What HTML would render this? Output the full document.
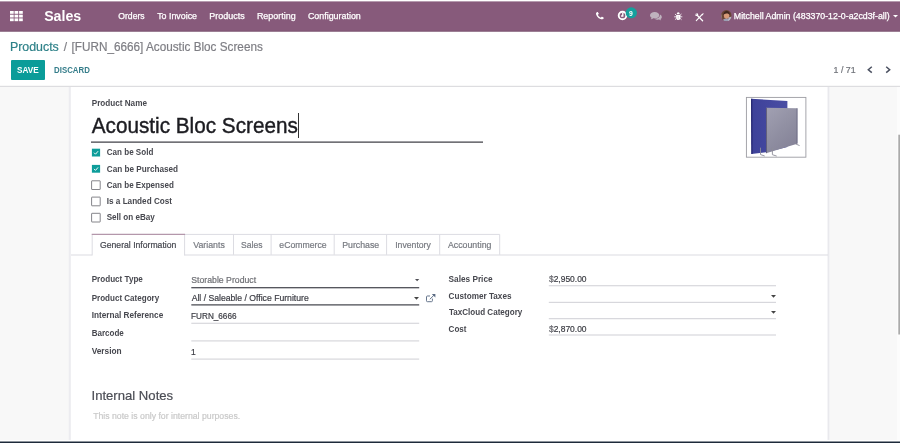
<!DOCTYPE html>
<html><head><meta charset="utf-8"><title>Acoustic Bloc Screens - Odoo</title>
<style>
*{box-sizing:border-box;margin:0;padding:0}
html,body{width:900px;height:443px;overflow:hidden;background:#fff;font-family:"Liberation Sans",sans-serif}
body{position:relative}
.a{position:absolute}
.t{position:absolute;white-space:nowrap;transform-origin:0 50%}
svg{position:absolute;overflow:visible}
.ul{position:absolute;height:1px;background:#d6d6da}
.ul.d{background:#55565c;height:1.4px}
</style></head><body>
<!-- background layers -->
<svg class="a" style="left:0;top:0" width="900" height="443" viewBox="0 0 900 443">
 <rect x="0" y="1.4" width="900" height="30.1" fill="#875a7b"/>
 <rect x="0" y="86.600" width="900" height="353.300" fill="#f8f8f8"/>
 <rect x="0" y="85.800" width="900" height="1.100" fill="#dadadd"/>
 <rect x="68.600" y="87" width="761" height="352.900" fill="#f0f0f3"/>
 <rect x="69.600" y="87" width="759" height="352.900" fill="#e5e5ea"/>
 <rect x="70.600" y="87" width="757" height="353" fill="#fff"/>
 <rect x="897" y="87" width="3" height="352.900" fill="#fcfcfc"/>
 <rect x="898.300" y="134.700" width="1.700" height="199.800" fill="#ababab"/>
 <rect x="0" y="441.500" width="900" height="1.500" fill="#1d2a3a"/>
 <rect x="0" y="30.800" width="900" height=".7" fill="#76526c"/>
</svg>

<!-- navbar icons -->
<svg style="left:10.2px;top:11px" width="12.8" height="10.2" viewBox="0 0 12.8 10.2"><g fill="#fff"><rect x="0" y="0" width="3.7" height="2.8"/><rect x="4.55" y="0" width="3.7" height="2.8"/><rect x="9.1" y="0" width="3.7" height="2.8"/><rect x="0" y="3.7" width="3.7" height="2.8"/><rect x="4.55" y="3.7" width="3.7" height="2.8"/><rect x="9.1" y="3.7" width="3.7" height="2.8"/><rect x="0" y="7.4" width="3.7" height="2.8"/><rect x="4.55" y="7.4" width="3.7" height="2.8"/><rect x="9.1" y="7.4" width="3.7" height="2.8"/></g></svg>

<!-- phone -->
<svg style="left:595.700px;top:12px" width="7.800" height="7.300" viewBox="192 128 1408 1408" preserveAspectRatio="none"><path fill="#fff" d="M1600 1240q0 27-10 70.500t-21 68.500q-21 50-122 106-94 51-186 51-27 0-53-3.500t-57.500-12.500-47-14.500-55.500-20.500-49-18q-98-35-175-83-127-79-264-216t-216-264q-48-77-83-175-3-9-18-49t-20.500-55.500-14.500-47-12.500-57.500-3.500-53q0-92 51-186 56-101 106-122 25-11 68.500-21t70.500-10q14 0 21 3 18 6 53 76 11 19 30 54t35 63.500 31 53.500q3 4 17.500 25t21.500 35.500 7 28.500q0 20-28.500 50t-62 55-62 53-28.500 46q0 9 5 22.500t8.500 20.500 14 24 11.500 19q76 137 174 235t235 174q2 1 19 11.500t24 14 20.500 8.500 22.500 5q18 0 46-28.500t53-62 55-62 50-28.500q14 0 28.500 7t35.500 21.500 25 17.500q25 15 53.500 31t63.500 35 54 30q70 35 76 53 3 7 3 21z"/></svg>

<!-- clock + badge -->
<svg style="left:617px;top:7px" width="21" height="14" viewBox="0 0 21 14">
 <circle cx="5.500" cy="8.500" r="3.800" fill="none" stroke="#fff" stroke-width="1.900"/>
 <path d="M5.800 6V9H4.100" fill="none" stroke="#fff" stroke-width="1.300"/>
 <ellipse cx="14.300" cy="5.800" rx="5.650" ry="5.500" fill="#14a09d"/>
</svg>

<!-- comments -->
<svg style="left:649.600px;top:11.600px" width="11.800" height="8.600" viewBox="0 0 11.800 8.600"><g fill="#bfb2be"><path d="M4.700 0C7.300 0 9.300 1.400 9.300 3.200S7.300 6.400 4.700 6.400c-.5 0-1-.05-1.400-.15C2.600 6.800 1.700 7.200.7 7.300c.5-.5.800-1 .9-1.600C.6 5.100 0 4.200 0 3.200 0 1.400 2.100 0 4.700 0z"/><path d="M9.900 2.400c1.200.5 1.900 1.400 1.900 2.500 0 .9-.5 1.600-1.300 2.200.1.500.4 1 .9 1.400-.9-.1-1.700-.4-2.300-.9-.4.100-.8.100-1.200.1-1.300 0-2.400-.4-3.100-1 2.900-.1 5.200-1.600 5.200-3.500 0-.3 0-.5-.1-.8z"/></g></svg>

<!-- bug -->
<svg style="left:673.500px;top:11.800px" width="8.500" height="8.300" viewBox="0 0 8.800 8.600"><g fill="none" stroke="#fff" stroke-width="0.850"><path d="M0.200 5h8.400M1 2.100l1.600 1.400M7.800 2.100L6.200 3.500M1 8l1.600-1.500M7.800 8L6.200 6.500"/></g><path fill="#fff" d="M2.300 3h4.200v2.900c0 1.400-.9 2.500-2.100 2.500S2.300 7.300 2.300 5.900z"/><path fill="#fff" d="M2.900 2.400C2.900 1.100 3.500.2 4.400.2s1.500.9 1.500 2.200z"/><path d="M4.400 4V7.800" stroke="#c9a9bf" stroke-width=".5"/></svg>

<!-- tools -->
<svg style="left:694.800px;top:12.900px" width="9" height="8.800" viewBox="0 0 9 8.800"><g stroke="#fff" fill="none" stroke-linecap="round"><path d="M1.700 1.700L7.600 7.800" stroke-width="1.250"/><path d="M7.500 1.200L1.300 7.700" stroke-width="1.100"/></g><circle cx="1.600" cy="1.600" r="1.500" fill="#fff"/><circle cx="0.900" cy="0.900" r="0.800" fill="#875a7b"/><path d="M6.600 1.800L8.300.2l.5.500L7.200 2.400z" fill="#fff"/></svg>

<!-- avatar -->
<svg style="left:720.700px;top:9.900px" width="10.700" height="11.400" viewBox="0 0 10.700 11.400"><defs><clipPath id="av"><ellipse cx="5.350" cy="5.700" rx="5.300" ry="5.600"/></clipPath></defs><g clip-path="url(#av)"><rect width="10.700" height="11.400" fill="#6a4436"/><path d="M0 3C1 5 1.500 8 1 11.400H0z" fill="#8f7f7a"/><ellipse cx="5.600" cy="5.600" rx="2.700" ry="3.300" fill="#d79a78"/><path d="M2.400 5C2.300 2.200 3.900.8 5.800.9c2.100.1 3.300 1.700 3 4.200C8 3.800 6.700 3.200 5.300 3.500 4.100 3.700 3 4.200 2.400 5z" fill="#3f271f"/><path d="M1.300 11.400C1.900 9.100 3.500 8.500 5.600 8.500S9.300 9.300 9.900 11.400z" fill="#9b9db4"/><path d="M7.500 7.500l3.200-1v5H7z" fill="#b9b7c6"/></g></svg>

<!-- user caret -->
<svg style="left:893px;top:14.800px" width="5" height="2.600" viewBox="0 0 5 2.600"><path d="M0 0h5L2.500 2.600z" fill="#fff"/></svg>

<!-- save button -->
<div class="a" style="left:11px;top:60px;width:34.400px;height:19.700px;background:#0a9c99;border-radius:1px"></div>

<!-- pager chevrons -->
<svg style="left:867px;top:66px" width="6" height="7.400" viewBox="0 0 6 7.400"><path d="M4.800.700L1.300 3.700l3.500 3" fill="none" stroke="#4a5060" stroke-width="1.500"/></svg>
<svg style="left:885.400px;top:66px" width="6" height="7.400" viewBox="0 0 6 7.400"><path d="M1.200.700l3.500 3L1.200 6.700" fill="none" stroke="#4a5060" stroke-width="1.500"/></svg>

<!-- title caret + underline -->
<div class="a" style="left:298px;top:112.500px;width:1px;height:25px;background:#333"></div>
<svg style="left:91.400px;top:141px" width="392" height="3" viewBox="0 0 392 3"><rect x="0" y="0.350" width="392" height="1.600" fill="#6a6a70"/></svg>

<!-- checkboxes -->
<svg style="left:0;top:0" width="900" height="443" viewBox="0 0 900 443">
 <rect x="91.900" y="148.700" width="8.200" height="7.800" fill="#0d9d9a"/>
 <path d="M94 152.700l1.500 1.500 2.600-3" fill="none" stroke="#fff" stroke-width=".95"/>
 <rect x="91.900" y="164.900" width="8.200" height="7.800" fill="#0d9d9a"/>
 <path d="M94 168.900l1.500 1.500 2.600-3" fill="none" stroke="#fff" stroke-width=".95"/>
 <g fill="#fff" stroke="#85858a" stroke-width="1"><rect x="91.600" y="180.800" width="8.600" height="8.700" rx=".3"/>
 <rect x="91.600" y="197.100" width="8.600" height="8.700" rx=".3"/>
 <rect x="91.600" y="213.300" width="8.600" height="8.700" rx=".3"/></g>
</svg>

<!-- product image -->
<svg style="left:746px;top:96.600px" width="60.400" height="60.400" viewBox="0 0 60.400 60.400">
 <defs><linearGradient id="gp" x1="0.200" y1="0" x2="0.800" y2="1"><stop offset="0" stop-color="#9f9eb0"/><stop offset=".5" stop-color="#908fa2"/><stop offset="1" stop-color="#838196"/></linearGradient>
 <linearGradient id="bp" x1="0" y1="0" x2="1" y2="0"><stop offset="0" stop-color="#3d4199"/><stop offset="1" stop-color="#4a4ea4"/></linearGradient></defs>
 <rect x=".400" y=".400" width="59.500" height="59.800" fill="#fff" stroke="#9c9ca2" stroke-width=".9"/>
 <path d="M5.100 1.700L41.400 4.100V50L20 55.300L5.400 57.100z" fill="url(#bp)"/>
 <path d="M5.100 1.700L6.300 1.800L6.500 56.900L5.400 57.100z" fill="#23256e"/>
 <path d="M20.100 10.700L51.200 11.200V46.700L20.100 56.300z" fill="url(#gp)"/>
 <path d="M20.100 10.700l.9 0V56l-.9.300z" fill="#5f5d78"/>
 <path d="M50.700 11.200h.8V46.600l-.8.200z" fill="#5f5d78"/>
 <path d="M14.500 50.700V57.600l4.200 1.400M26.400 50.700V57.700l4.300 1.400M49.600 46.900l4 1.700" fill="none" stroke="#8d8d98" stroke-width=".9"/>
</svg>

<!-- tabs -->
<svg style="left:0;top:0" width="900" height="443" viewBox="0 0 900 443">
 <rect x="71" y="254.500" width="757" height="1" fill="#dcdce2"/>
 <path d="M184.600 234.400H499.700V254.800" fill="none" stroke="#dcdce2" stroke-width="1"/>
 <path d="M233.500 234.400V254.800M271.100 234.400V254.800M334.200 234.400V254.800M386.600 234.400V254.800M439.700 234.400V254.800" fill="none" stroke="#dcdce2" stroke-width="1"/>
 <rect x="92.300" y="234.600" width="92" height="21.500" fill="#fff"/>
 <path d="M92.200 255.400V234.400M184.600 234.400V255.400" fill="none" stroke="#dcdce2" stroke-width="1"/>
 <path d="M91.700 234.400H185.100" fill="none" stroke="#b497ab" stroke-width="1.100"/>
</svg>

<!-- field underlines -->
<svg style="left:0;top:0" width="900" height="443" viewBox="0 0 900 443">
 <g fill="#56575e"><rect x="191.300" y="287" width="227.900" height="1.350"/><rect x="191.300" y="304.200" width="227.900" height="1.350"/></g>
 <g fill="#d7d7dc"><rect x="191.300" y="322.700" width="227.900" height="1.200"/><rect x="191.300" y="340.300" width="227.900" height="1.200"/><rect x="191.300" y="358.500" width="227.900" height="1.200"/>
 <rect x="548.800" y="285.100" width="227.200" height="1.200"/><rect x="548.800" y="301.800" width="227.200" height="1.200"/><rect x="548.800" y="318.050" width="227.200" height="1.200"/><rect x="548.800" y="334.400" width="227.200" height="1.200"/></g>
</svg>

<!-- dropdown carets -->
<svg style="left:414.900px;top:278.800px" width="4.300" height="2.300" viewBox="0 0 4.300 2.300"><path d="M0 0h4.300L2.150 2.300z" fill="#505056"/></svg>
<svg style="left:413.800px;top:296.800px" width="5" height="2.700" viewBox="0 0 5 2.700"><path d="M0 0h5L2.500 2.700z" fill="#444"/></svg>
<svg style="left:771px;top:294.800px" width="5" height="2.700" viewBox="0 0 5 2.700"><path d="M0 0h5L2.500 2.700z" fill="#444"/></svg>
<svg style="left:771px;top:311.100px" width="5" height="2.700" viewBox="0 0 5 2.700"><path d="M0 0h5L2.500 2.700z" fill="#444"/></svg>

<!-- external link -->
<svg style="left:425.600px;top:293.800px" width="9.600" height="8.400" viewBox="0 0 9.600 8.400"><g fill="none" stroke="#64748c" stroke-width="1"><path d="M6.400 4.600V6.800a.9.900 0 0 1-.9.900H1.400a.9.900 0 0 1-.9-.9V2.900A.9.900 0 0 1 1.400 2H4"/><path d="M3.800 5.300L8.600.6"/></g><path d="M5.800.1h3.600v3.500z" fill="#5a6a82"/></svg>

<div id="tx" style="position:absolute;left:0;top:0;width:900px;height:443px;will-change:transform">
<div class="t" style="left:44px;top:7px;font-size:14px;line-height:18.2px;color:#fff;font-weight:bold;transform:translateX(0.14px) scaleX(1.0136);">Sales</div>
<div class="t" style="left:118px;top:11px;font-size:8.6px;line-height:11.18px;color:#fff;-webkit-text-stroke:.25px #fff;transform:translateX(0.27px) scaleX(1.0022);">Orders</div>
<div class="t" style="left:157px;top:11px;font-size:8.6px;line-height:11.18px;color:#fff;-webkit-text-stroke:.25px #fff;transform:translateX(0.13px) scaleX(1.0315);">To Invoice</div>
<div class="t" style="left:209px;top:11px;font-size:8.6px;line-height:11.18px;color:#fff;-webkit-text-stroke:.25px #fff;transform:translateX(0.3px) scaleX(1.0424);">Products</div>
<div class="t" style="left:256px;top:11px;font-size:8.6px;line-height:11.18px;color:#fff;-webkit-text-stroke:.25px #fff;transform:translateX(0.93px) scaleX(1.0382);">Reporting</div>
<div class="t" style="left:307px;top:11px;font-size:8.6px;line-height:11.18px;color:#fff;-webkit-text-stroke:.25px #fff;transform:translateX(0.91px) scaleX(1.0343);">Configuration</div>
<div class="t" style="left:733px;top:11px;font-size:8.6px;line-height:11.18px;color:#fff;-webkit-text-stroke:.25px #fff;transform:translateX(0.83px) scaleX(1.0227);">Mitchell Admin (483370-12-0-a2cd3f-all)</div>
<div class="t" style="left:9px;top:40px;font-size:11.9px;line-height:15.47px;color:#2f8289;-webkit-text-stroke:.2px #2f8289;transform:translateX(0.9px) scaleX(1.0416);">Products</div>
<div class="t" style="left:63px;top:40px;font-size:11.9px;line-height:15.47px;color:#7e7e84;-webkit-text-stroke:.2px #7e7e84;transform:translateX(0.74px) scaleX(1.0000);">/</div>
<div class="t" style="left:71px;top:40px;font-size:11.9px;line-height:15.47px;color:#7e7e84;-webkit-text-stroke:.2px #7e7e84;transform:translateX(0.56px) scaleX(0.9877);">[FURN_6666] Acoustic Bloc Screens</div>
<div class="t" style="left:17px;top:65px;font-size:8.5px;line-height:11.05px;color:#fff;font-weight:bold;transform:translateX(0.08px) scaleX(0.9620);">SAVE</div>
<div class="t" style="left:54px;top:65px;font-size:8.5px;line-height:11.05px;color:#357d8a;font-weight:bold;transform:translateX(0.11px) scaleX(0.9214);">DISCARD</div>
<div class="t" style="left:833px;top:65px;font-size:8.4px;line-height:10.92px;color:#70737a;-webkit-text-stroke:.2px #70737a;transform:translateX(0.51px) scaleX(1.0548);">1 / 71</div>
<div class="t" style="left:91px;top:98px;font-size:8.5px;line-height:11.05px;color:#47484f;font-weight:bold;transform:translateX(0.69px) scaleX(0.9587);">Product Name</div>
<div class="t" style="left:91px;top:112px;font-size:21.2px;line-height:27.56px;color:#1c1c21;-webkit-text-stroke:.4px #1c1c21;transform:translateX(0.79px) scaleX(0.9772);">Acoustic Bloc Screens</div>
<div class="t" style="left:106px;top:147px;font-size:8.5px;line-height:11.05px;color:#47484f;font-weight:bold;transform:translateX(0.81px) scaleX(0.9464);">Can be Sold</div>
<div class="t" style="left:106px;top:164px;font-size:8.5px;line-height:11.05px;color:#47484f;font-weight:bold;transform:translateX(0.77px) scaleX(0.9610);">Can be Purchased</div>
<div class="t" style="left:106px;top:180px;font-size:8.5px;line-height:11.05px;color:#47484f;font-weight:bold;transform:translateX(0.81px) scaleX(0.9461);">Can be Expensed</div>
<div class="t" style="left:106px;top:196px;font-size:8.5px;line-height:11.05px;color:#47484f;font-weight:bold;transform:translateX(0.77px) scaleX(0.9589);">Is a Landed Cost</div>
<div class="t" style="left:106px;top:212px;font-size:8.5px;line-height:11.05px;color:#47484f;font-weight:bold;transform:translateX(0.7px) scaleX(0.9524);">Sell on eBay</div>
<div class="t" style="left:99px;top:240px;font-size:8.5px;line-height:11.05px;color:#45474f;-webkit-text-stroke:.2px #45474f;transform:translateX(1.0px) scaleX(1.0163);">General Information</div>
<div class="t" style="left:193px;top:240px;font-size:8.5px;line-height:11.05px;color:#777a80;-webkit-text-stroke:.2px #777a80;transform:translateX(0.18px) scaleX(1.0344);">Variants</div>
<div class="t" style="left:241px;top:240px;font-size:8.5px;line-height:11.05px;color:#777a80;-webkit-text-stroke:.2px #777a80;transform:translateX(0.1px) scaleX(1.0079);">Sales</div>
<div class="t" style="left:279px;top:240px;font-size:8.5px;line-height:11.05px;color:#777a80;-webkit-text-stroke:.2px #777a80;transform:translateX(0.35px) scaleX(1.0214);">eCommerce</div>
<div class="t" style="left:342px;top:240px;font-size:8.5px;line-height:11.05px;color:#777a80;-webkit-text-stroke:.2px #777a80;transform:translateX(0.19px) scaleX(1.0320);">Purchase</div>
<div class="t" style="left:395px;top:240px;font-size:8.5px;line-height:11.05px;color:#777a80;-webkit-text-stroke:.2px #777a80;transform:translateX(0.21px) scaleX(1.0182);">Inventory</div>
<div class="t" style="left:448px;top:240px;font-size:8.5px;line-height:11.05px;color:#777a80;-webkit-text-stroke:.2px #777a80;transform:translateX(0.0px) scaleX(1.0314);">Accounting</div>
<div class="t" style="left:91px;top:274px;font-size:8.5px;line-height:11.05px;color:#47484f;font-weight:bold;transform:translateX(0.69px) scaleX(0.9533);">Product Type</div>
<div class="t" style="left:91px;top:293px;font-size:8.5px;line-height:11.05px;color:#47484f;font-weight:bold;transform:translateX(0.69px) scaleX(0.9462);">Product Category</div>
<div class="t" style="left:91px;top:310px;font-size:8.5px;line-height:11.05px;color:#47484f;font-weight:bold;transform:translateX(0.68px) scaleX(0.9647);">Internal Reference</div>
<div class="t" style="left:91px;top:328px;font-size:8.5px;line-height:11.05px;color:#47484f;font-weight:bold;transform:translateX(0.69px) scaleX(0.9434);">Barcode</div>
<div class="t" style="left:91px;top:346px;font-size:8.5px;line-height:11.05px;color:#47484f;font-weight:bold;transform:translateX(0.66px) scaleX(0.9772);">Version</div>
<div class="t" style="left:191px;top:275px;font-size:8.5px;line-height:11.05px;color:#6f7075;-webkit-text-stroke:.2px #6f7075;transform:translateX(0.27px) scaleX(1.0243);">Storable Product</div>
<div class="t" style="left:191px;top:293px;font-size:8.5px;line-height:11.05px;color:#3c3d44;-webkit-text-stroke:.2px #3c3d44;transform:translateX(0.63px) scaleX(1.0173);">All / Saleable / Office Furniture</div>
<div class="t" style="left:191px;top:311px;font-size:8.5px;line-height:11.05px;color:#3c3d44;-webkit-text-stroke:.2px #3c3d44;transform:translateX(0.11px) scaleX(0.9602);">FURN_6666</div>
<div class="t" style="left:191px;top:347px;font-size:8.5px;line-height:11.05px;color:#3c3d44;-webkit-text-stroke:.2px #3c3d44;transform:translateX(0.08px) scaleX(1.0000);">1</div>
<div class="t" style="left:448px;top:274px;font-size:8.5px;line-height:11.05px;color:#47484f;font-weight:bold;transform:translateX(0.56px) scaleX(0.9696);">Sales Price</div>
<div class="t" style="left:448px;top:291px;font-size:8.5px;line-height:11.05px;color:#47484f;font-weight:bold;transform:translateX(0.59px) scaleX(0.9600);">Customer Taxes</div>
<div class="t" style="left:448px;top:307px;font-size:8.5px;line-height:11.05px;color:#47484f;font-weight:bold;transform:translateX(0.98px) scaleX(0.9483);">TaxCloud Category</div>
<div class="t" style="left:448px;top:324px;font-size:8.5px;line-height:11.05px;color:#47484f;font-weight:bold;transform:translateX(0.59px) scaleX(0.9484);">Cost</div>
<div class="t" style="left:548px;top:274px;font-size:8.5px;line-height:11.05px;color:#3c3d44;-webkit-text-stroke:.2px #3c3d44;transform:translateX(0.92px) scaleX(0.9944);"><span style="color:#8a8a90">$</span>2,950.00</div>
<div class="t" style="left:548px;top:324px;font-size:8.5px;line-height:11.05px;color:#3c3d44;-webkit-text-stroke:.2px #3c3d44;transform:translateX(0.92px) scaleX(0.9944);"><span style="color:#8a8a90">$</span>2,870.00</div>
<div class="t" style="left:91px;top:388px;font-size:13.0px;line-height:16.9px;color:#4b4d55;-webkit-text-stroke:.2px #4b4d55;transform:translateX(0.51px) scaleX(1.0083);">Internal Notes</div>
<div class="t" style="left:93px;top:411px;font-size:8.5px;line-height:11.05px;color:#c9c9c9;-webkit-text-stroke:.2px #c9c9c9;transform:translateX(0.13px) scaleX(1.0237);">This note is only for internal purposes.</div>
<div class="t" style="left:629px;top:10px;font-size:6.8px;line-height:8.84px;color:#fff;font-weight:bold;transform:translateX(0.05px) scaleX(1.0000);">9</div>
</div>
</body></html>
